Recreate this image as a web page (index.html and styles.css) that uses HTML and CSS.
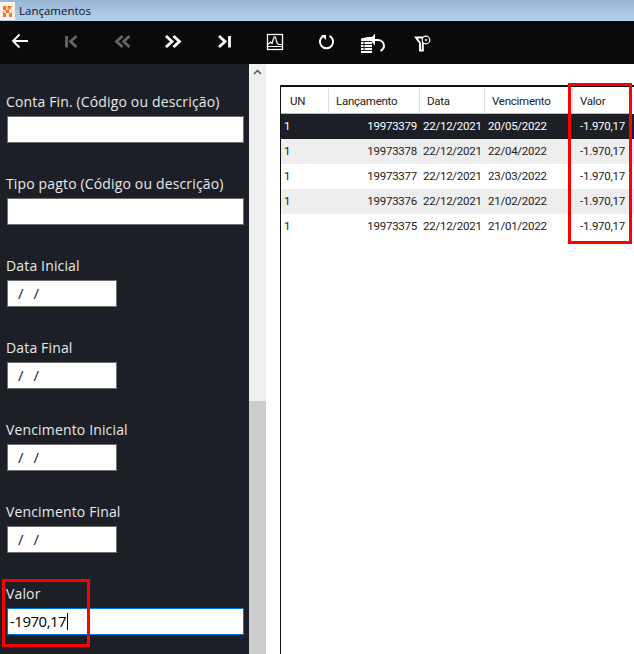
FILE: index.html
```html
<!DOCTYPE html>
<html lang="pt-BR">
<head>
<meta charset="utf-8">
<title>Lançamentos</title>
<link rel="stylesheet" href="styles.css">
</head>
<body>
<div class="app">
  <header class="titlebar">
    <svg class="applogo" width="15" height="18" viewBox="0 0 15 18"><rect width="15" height="18" fill="#fdf3ea"/><path d="M3 4h3v4H3zM8 4l3 0v3H8zM6 8h3v3H6zM3 11h3v4H3zM9 11h3v4H9z" fill="#f4772e"/><path d="M6 4l3 4M9 8l3-4M3 11l3-3M9 11l3 0" stroke="#f59a60" stroke-width="1.200"/></svg>
    <span class="title">Lançamentos</span>
  </header>
  <nav class="toolbar">
    <svg class="ic" width="24" height="24" viewBox="0 0 24 24"><path d="M5 12h15M11.500 5.500L5 12l6.500 6.500" fill="none" stroke="#fff" stroke-width="1.800"/></svg>
    <svg class="ic" width="24" height="24" viewBox="0 0 24 24"><path d="M7.500 7v11.500M17.500 7l-6 5.500 6 5.500" fill="none" stroke="#666" stroke-width="2.800"/></svg>
    <svg class="ic" width="24" height="24" viewBox="0 0 24 24"><path d="M12.500 7l-6 5.500 6 5.500M19.500 7l-6 5.500 6 5.500" fill="none" stroke="#666" stroke-width="2.800"/></svg>
    <svg class="ic" width="24" height="24" viewBox="0 0 24 24"><path d="M5 7l6 5.500-6 5.500M12.500 7l6 5.500-6 5.500" fill="none" stroke="#fff" stroke-width="2.800"/></svg>
    <svg class="ic" width="24" height="24" viewBox="0 0 24 24"><path d="M7 7l6 5.500-6 5.500M17.500 7v11.500" fill="none" stroke="#fff" stroke-width="2.800"/></svg>
    <svg class="ic" width="24" height="24" viewBox="0 0 24 24"><rect x="4.500" y="5.500" width="15" height="15" fill="none" stroke="#fff" stroke-width="1.300"/><path d="M5 17.500h14" stroke="#fff"/><path d="M5 15.500l2.500-2.500 1.500 1.500 2-6.500h1.500l1.500 6 1.500 1.500H19" fill="none" stroke="#fff" stroke-width="1.200"/></svg>
    <svg class="ic" width="24" height="24" viewBox="0 0 24 24"><path d="M15.500 6.800a6.600 6.600 0 1 1-6 0" fill="none" stroke="#fff" stroke-width="2"/><path d="M7 6h5v5z" fill="#fff"/></svg>
    <svg class="ic" width="24" height="24" viewBox="0 0 24 24"><path d="M-4 9.500l7-1.500h4v16H-4z" fill="#fff"/><path d="M-4 12.500h11M-4 15.500h11M-4 18.500h11M-4 21.500h11M-1 12v10" stroke="#0a0a0a" stroke-width=".9"/><path d="M8 11h4.500c4 0 6.500 2.500 6.500 6 0 2-1 3.500-3.500 5" fill="none" stroke="#fff" stroke-width="2"/><path d="M5 10.500l5-6v12z" fill="#fff"/></svg>
    <svg class="ic" width="24" height="24" viewBox="0 0 24 24"><path d="M0 8.500h10L6.800 14v7.500H4V14z" fill="none" stroke="#fff" stroke-width="2"/><circle cx="10" cy="11" r="3.800" fill="#0a0a0a" stroke="#fff" stroke-width="1.200"/><circle cx="10" cy="11" r="1.300" fill="#bbb"/></svg>
  </nav>
  <div class="body">
    <aside class="filters">
      <div class="field"><label>Conta Fin. (Código ou descrição)</label><div class="input">&nbsp;</div></div>
      <div class="field"><label>Tipo pagto (Código ou descrição)</label><div class="input">&nbsp;</div></div>
      <div class="field"><label>Data Inicial</label><div class="input short">/ /</div></div>
      <div class="field"><label>Data Final</label><div class="input short">/ /</div></div>
      <div class="field"><label>Vencimento Inicial</label><div class="input short">/ /</div></div>
      <div class="field"><label>Vencimento Final</label><div class="input short">/ /</div></div>
      <div class="field"><label>Valor</label><div class="input focus">-1970,17<i class="caret"></i></div></div>
    </aside>
    <div class="scrollbar">
      <svg class="arrow" width="17" height="17" viewBox="0 0 17 17"><path d="M5 10l3.500-3.500L12 10" fill="none" stroke="#505050" stroke-width="1.500"/></svg>
      <div class="thumb"></div>
    </div>
    <main class="content">
      <div class="grid">
        <div class="row head">
          <span class="c un">UN</span><span class="c lan">Lançamento</span><span class="c dt">Data</span><span class="c ven">Vencimento</span><span class="c val">Valor</span>
        </div>
        <div class="row sel"><span class="c un">1</span><span class="c lan">19973379</span><span class="c dt">22/12/2021</span><span class="c ven">20/05/2022</span><span class="c val">-1.970,17</span></div>
        <div class="row alt"><span class="c un">1</span><span class="c lan">19973378</span><span class="c dt">22/12/2021</span><span class="c ven">22/04/2022</span><span class="c val">-1.970,17</span></div>
        <div class="row"><span class="c un">1</span><span class="c lan">19973377</span><span class="c dt">22/12/2021</span><span class="c ven">23/03/2022</span><span class="c val">-1.970,17</span></div>
        <div class="row alt"><span class="c un">1</span><span class="c lan">19973376</span><span class="c dt">22/12/2021</span><span class="c ven">21/02/2022</span><span class="c val">-1.970,17</span></div>
        <div class="row"><span class="c un">1</span><span class="c lan">19973375</span><span class="c dt">22/12/2021</span><span class="c ven">21/01/2022</span><span class="c val">-1.970,17</span></div>
      </div>
    </main>
  </div>
  <div class="mark mark-col"></div>
  <div class="mark mark-val"></div>
</div>
</body>
</html>
```
FILE: styles.css
```css
* { box-sizing: border-box; }
html, body { margin: 0; height: 100%; overflow: hidden; }
body { font-family: "Open Sans", "Noto Sans", sans-serif; }
.app { position: relative; width: 634px; height: 654px; display: flex; flex-direction: column; overflow: hidden; }
.titlebar { height: 21px; display: flex; align-items: center; gap: 4px; background: linear-gradient(#9ab6d6, #b6d0ea); flex: none; }
.title { font-size: 11.5px; color: #0d1030; }
.toolbar { height: 43px; flex: none; background: #0a0a0a; display: flex; gap: 27px; padding: 8px 0 0 8px; }
.ic { flex: none; display: block; overflow: visible; }
.body { flex: 1; display: flex; min-height: 0; }
.filters { width: 249px; flex: none; background: #1c2026; padding-top: 28px; padding-left: 6px; display: flex; flex-direction: column; gap: 28px; overflow: hidden; }
.field { display: flex; flex-direction: column; height: 54px; }
.field label { font-size: 14px; line-height: 19px; color: #e8e8e8; height: 24px; letter-spacing: .15px; }
.input { margin-left: 1px; width: 237px; height: 27px; background: #fff; border: 1px solid #707070; font-size: 14px; line-height: 25px; color: #000; display: flex; align-items: center; }
.short { width: 110px; padding-left: 10px; white-space: pre; word-spacing: 6px; color: #123; font-size: 15px; }
.focus { border-color: #0078d7; padding-left: 2px; font-size: 15px; letter-spacing: -.5px; }
.caret { display: block; width: 1px; height: 17px; background: #000; margin-left: 1px; }
.scrollbar { width: 17px; flex: none; background: #f0f0f0; display: flex; flex-direction: column; justify-content: space-between; }
.thumb { height: 253px; background: #cdcdcd; }
.arrow { display: block; }
.content { flex: 1; background: #fff; padding: 21px 0 0 14px; min-width: 0; }
.grid { height: 100%; border-left: 1px solid #111; border-top: 2px solid #111; width: 354px; }
.row { display: flex; height: 25px; font-family: Roboto, sans-serif; font-size: 11.5px; line-height: 25px; color: #222; letter-spacing: -.25px; }
.row .c { display: block; flex: none; padding: 0 3px; white-space: nowrap; }
.un { width: 48px; }
.lan { width: 91px; text-align: right; }
.dt { width: 65px; }
.ven { width: 88px; }
.val { width: 61px; text-align: right; }
.row .val { padding-right: 9px; }
.row.head { height: 27px; color: #222; border-top: 1px solid #fff; }
.head .c { padding-left: 7px; border-right: 1px solid #dcdcdc; border-bottom: 1px solid #bbb; height: 26px; line-height: 26px; }
.head .un { padding-left: 9px; }
.head .lan, .head .val { text-align: left; }
.head .val { width: 57px; padding-left: 7px; }
.sel { background: #1c2026; color: #fff; }
.alt { background: #eeeeee; }
.mark { position: absolute; border: 3px solid #f00; }
.mark-col { left: 568px; top: 83px; width: 64px; height: 161px; }
.mark-val { left: 2px; top: 579px; width: 88px; height: 68px; }
```
